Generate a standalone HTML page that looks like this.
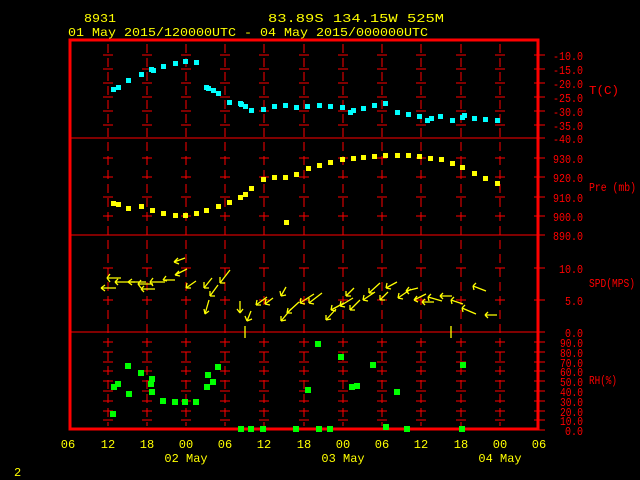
<!DOCTYPE html>
<html><head><meta charset="utf-8"><style>
html,body{margin:0;padding:0;background:#000;width:640px;height:480px;overflow:hidden}
svg{display:block}
text{font-family:"Liberation Mono",monospace;font-size:12px}
.y{fill:#ffff00}.r{fill:#ff0000}
</style></head><body>
<svg width="640" height="480" viewBox="0 0 640 480">
<defs>
<g id="col" stroke="#ff0000" stroke-width="1">
<line x1="0" y1="44" x2="0" y2="426" stroke-dasharray="9,5"/>
<path d="M-5 55h10M-5 69h10M-5 83h10M-5 97h10M-5 111h10M-5 125h10M-5 158h10M-5 177h10M-5 197h10M-5 216h10M-5 268h10M-5 300h10M-5 342h10M-5 352h10M-5 362h10M-5 371h10M-5 381h10M-5 391h10M-5 401h10M-5 411h10M-5 420h10"/>
</g>
<rect id="c" width="5" height="5" fill="#00ffff"/>
<rect id="p" width="5" height="5" fill="#ffff00"/>
<rect id="g" width="6" height="6" fill="#00ff00"/>
</defs>
<g>
<use href="#col" x="108"/><use href="#col" x="147"/><use href="#col" x="186"/><use href="#col" x="225"/><use href="#col" x="264"/><use href="#col" x="304"/><use href="#col" x="343"/><use href="#col" x="382"/><use href="#col" x="421"/><use href="#col" x="461"/><use href="#col" x="500"/>
</g>
<g stroke="#ff0000">
<line x1="70" y1="138" x2="539" y2="138"/>
<line x1="70" y1="235" x2="539" y2="235"/>
<line x1="70" y1="332" x2="539" y2="332"/>
<path d="M534 55h11M534 69h11M534 83h11M534 97h11M534 111h11M534 125h11M534 138h11M534 158h11M534 177h11M534 197h11M534 216h11M534 235h11M534 268h11M534 300h11M534 332h11M534 342h11M534 352h11M534 362h11M534 371h11M534 381h11M534 391h11M534 401h11M534 411h11M534 420h11M534 430h11"/>
<rect x="70" y="40" width="468" height="389" fill="none" stroke-width="3"/>
</g>
<g class="r" text-anchor="end">
<text x="583" y="60" textLength="30" lengthAdjust="spacingAndGlyphs">-10.0</text><text x="583" y="74" textLength="30" lengthAdjust="spacingAndGlyphs">-15.0</text><text x="583" y="88" textLength="30" lengthAdjust="spacingAndGlyphs">-20.0</text><text x="583" y="102" textLength="30" lengthAdjust="spacingAndGlyphs">-25.0</text><text x="583" y="116" textLength="30" lengthAdjust="spacingAndGlyphs">-30.0</text><text x="583" y="130" textLength="30" lengthAdjust="spacingAndGlyphs">-35.0</text><text x="583" y="143" textLength="30" lengthAdjust="spacingAndGlyphs">-40.0</text>
<text x="583" y="163" textLength="30" lengthAdjust="spacingAndGlyphs">930.0</text><text x="583" y="182" textLength="30" lengthAdjust="spacingAndGlyphs">920.0</text><text x="583" y="202" textLength="30" lengthAdjust="spacingAndGlyphs">910.0</text><text x="583" y="221" textLength="30" lengthAdjust="spacingAndGlyphs">900.0</text><text x="583" y="240" textLength="30" lengthAdjust="spacingAndGlyphs">890.0</text>
<text x="583" y="273" textLength="24" lengthAdjust="spacingAndGlyphs">10.0</text><text x="583" y="305" textLength="18" lengthAdjust="spacingAndGlyphs">5.0</text><text x="583" y="337" textLength="18" lengthAdjust="spacingAndGlyphs">0.0</text>
<text x="583" y="347" textLength="23" lengthAdjust="spacingAndGlyphs">90.0</text><text x="583" y="357" textLength="23" lengthAdjust="spacingAndGlyphs">80.0</text><text x="583" y="367" textLength="23" lengthAdjust="spacingAndGlyphs">70.0</text><text x="583" y="376" textLength="23" lengthAdjust="spacingAndGlyphs">60.0</text><text x="583" y="386" textLength="23" lengthAdjust="spacingAndGlyphs">50.0</text><text x="583" y="396" textLength="23" lengthAdjust="spacingAndGlyphs">40.0</text><text x="583" y="406" textLength="23" lengthAdjust="spacingAndGlyphs">30.0</text><text x="583" y="416" textLength="23" lengthAdjust="spacingAndGlyphs">20.0</text><text x="583" y="425" textLength="23" lengthAdjust="spacingAndGlyphs">10.0</text><text x="583" y="435" textLength="18" lengthAdjust="spacingAndGlyphs">0.0</text>
</g>
<g class="r">
<text x="589" y="94" textLength="30" lengthAdjust="spacingAndGlyphs">T(C)</text><text x="589" y="191" textLength="47" lengthAdjust="spacingAndGlyphs">Pre (mb)</text><text x="589" y="287" textLength="46" lengthAdjust="spacingAndGlyphs">SPD(MPS)</text><text x="589" y="384" textLength="28" lengthAdjust="spacingAndGlyphs">RH(%)</text>
</g>
<g class="y">
<text x="84" y="22" textLength="32" lengthAdjust="spacingAndGlyphs">8931</text>
<text x="268" y="22" textLength="176" lengthAdjust="spacingAndGlyphs">83.89S  134.15W   525M</text>
<text x="68" y="36" textLength="360" lengthAdjust="spacingAndGlyphs">01 May 2015/120000UTC - 04 May 2015/000000UTC</text>
<g text-anchor="middle">
<text x="68" y="448">06</text><text x="108" y="448">12</text><text x="147" y="448">18</text><text x="186" y="448">00</text><text x="225" y="448">06</text><text x="264" y="448">12</text><text x="304" y="448">18</text><text x="343" y="448">00</text><text x="382" y="448">06</text><text x="421" y="448">12</text><text x="461" y="448">18</text><text x="500" y="448">00</text><text x="539" y="448">06</text>
<text x="186" y="462">02 May</text><text x="343" y="462">03 May</text><text x="500" y="462">04 May</text>
</g>
<text x="14" y="476">2</text>
</g>
<g transform="translate(-2,-2)">
<use href="#c" x="113" y="89"/><use href="#c" x="118" y="87"/><use href="#c" x="128" y="80"/><use href="#c" x="141" y="74"/><use href="#c" x="151" y="69"/><use href="#c" x="153" y="70"/><use href="#c" x="163" y="66"/><use href="#c" x="175" y="63"/><use href="#c" x="185" y="61"/><use href="#c" x="196" y="62"/><use href="#c" x="206" y="87"/><use href="#c" x="208" y="88"/><use href="#c" x="213" y="90"/><use href="#c" x="218" y="93"/><use href="#c" x="229" y="102"/><use href="#c" x="240" y="103"/><use href="#c" x="241" y="104"/><use href="#c" x="245" y="106"/><use href="#c" x="251" y="110"/><use href="#c" x="263" y="109"/><use href="#c" x="274" y="106"/><use href="#c" x="285" y="105"/><use href="#c" x="296" y="107"/><use href="#c" x="307" y="106"/><use href="#c" x="319" y="105"/><use href="#c" x="330" y="106"/><use href="#c" x="342" y="107"/><use href="#c" x="350" y="112"/><use href="#c" x="353" y="110"/><use href="#c" x="363" y="108"/><use href="#c" x="374" y="105"/><use href="#c" x="385" y="103"/><use href="#c" x="397" y="112"/><use href="#c" x="408" y="114"/><use href="#c" x="419" y="116"/><use href="#c" x="427" y="120"/><use href="#c" x="431" y="118"/><use href="#c" x="440" y="116"/><use href="#c" x="452" y="120"/><use href="#c" x="462" y="117"/><use href="#c" x="464" y="115"/><use href="#c" x="474" y="118"/><use href="#c" x="485" y="119"/><use href="#c" x="497" y="120"/>
<use href="#p" x="113" y="203"/><use href="#p" x="118" y="204"/><use href="#p" x="128" y="208"/><use href="#p" x="141" y="206"/><use href="#p" x="152" y="210"/><use href="#p" x="163" y="213"/><use href="#p" x="175" y="215"/><use href="#p" x="185" y="215"/><use href="#p" x="196" y="213"/><use href="#p" x="206" y="210"/><use href="#p" x="218" y="206"/><use href="#p" x="229" y="202"/><use href="#p" x="240" y="197"/><use href="#p" x="245" y="194"/><use href="#p" x="251" y="188"/><use href="#p" x="263" y="179"/><use href="#p" x="274" y="177"/><use href="#p" x="285" y="177"/><use href="#p" x="296" y="174"/><use href="#p" x="308" y="168"/><use href="#p" x="319" y="165"/><use href="#p" x="330" y="162"/><use href="#p" x="342" y="159"/><use href="#p" x="353" y="158"/><use href="#p" x="363" y="157"/><use href="#p" x="374" y="156"/><use href="#p" x="385" y="155"/><use href="#p" x="397" y="155"/><use href="#p" x="408" y="155"/><use href="#p" x="419" y="156"/><use href="#p" x="430" y="158"/><use href="#p" x="441" y="159"/><use href="#p" x="452" y="163"/><use href="#p" x="462" y="167"/><use href="#p" x="474" y="173"/><use href="#p" x="485" y="178"/><use href="#p" x="497" y="183"/><use href="#p" x="286" y="222"/>
</g>
<g transform="translate(-3,-3)">
<use href="#g" x="113" y="414"/><use href="#g" x="114" y="387"/><use href="#g" x="118" y="384"/><use href="#g" x="128" y="366"/><use href="#g" x="129" y="394"/><use href="#g" x="141" y="373"/><use href="#g" x="151" y="384"/><use href="#g" x="152" y="379"/><use href="#g" x="152" y="392"/><use href="#g" x="163" y="401"/><use href="#g" x="175" y="402"/><use href="#g" x="185" y="402"/><use href="#g" x="196" y="402"/><use href="#g" x="207" y="387"/><use href="#g" x="208" y="375"/><use href="#g" x="213" y="382"/><use href="#g" x="218" y="367"/><use href="#g" x="308" y="390"/><use href="#g" x="318" y="344"/><use href="#g" x="341" y="357"/><use href="#g" x="352" y="387"/><use href="#g" x="357" y="386"/><use href="#g" x="373" y="365"/><use href="#g" x="397" y="392"/><use href="#g" x="463" y="365"/>
<use href="#g" x="241" y="429"/><use href="#g" x="251" y="429"/><use href="#g" x="263" y="429"/><use href="#g" x="296" y="429"/><use href="#g" x="319" y="429"/><use href="#g" x="330" y="429"/><use href="#g" x="386" y="427"/><use href="#g" x="407" y="429"/><use href="#g" x="462" y="429"/>
</g>
<g stroke="#ffff00" stroke-width="1.3" fill="none">
<line x1="245" y1="326" x2="245" y2="338"/><line x1="451" y1="326" x2="451" y2="338"/>
<path d="M101 288h15M101 288l4-3M101 288l4 3"/>
<path d="M107 278h14M107 278l3-4M107 278l3 4"/>
<path d="M115 282h20M115 282l3-3M115 282l3 3"/>
<path d="M128 282h18M128 282l4-3M128 282l4 3"/>
<path d="M138 284h15M138 284l3-4M138 284l3 4"/>
<path d="M141 289h14M141 289l3-3M141 289l3 3"/>
<path d="M150 282h15M150 282l3-4M150 282l3 4"/>
<path d="M163 280h12M163 280l3-4M163 280l4 1"/>
<path d="M175 275l12-6M175 275l4-4M175 275l5 1"/>
<path d="M174 262l11-4M174 262l4-4M174 262l5 2"/>
<path d="M186 288l10-7M186 288l1-5M186 288l5 0"/>
<path d="M204 288l8-10M204 288l0-6M204 288l5 0"/>
<path d="M205 314l4-14M205 314l-1-5M205 314l4-3"/>
<path d="M210 296l8-11M210 296l0-5M210 296l5 0"/>
<path d="M220 283l10-13M220 283l0-6M220 283l5 0"/>
<path d="M240 313l0-12M240 313l-3-4M240 313l3-4"/>
<path d="M247 321l4-10M247 321l-2-5M247 321l5-2"/>
<path d="M256 305l11-8M256 305l1-5M256 305l5 0"/>
<path d="M265 304l8-6M265 304l1-5M265 304l5 1"/>
<path d="M281 296l5-9M281 296l-1-5M281 296l5-1"/>
<path d="M281 321l10-12M281 321l0-5M281 321l5-1"/>
<path d="M287 313l12-11M287 313l1-5M287 313l5 0"/>
<path d="M300 303l14-9M300 303l1-5M300 303l5 1"/>
<path d="M309 303l13-10M309 303l0-5M309 303l5 1"/>
<path d="M326 320l10-11M326 320l0-5M326 320l5-1"/>
<path d="M331 310l13-7M331 310l1-5M331 310l5 1"/>
<path d="M340 306l13-8M340 306l1-5M340 306l5 1"/>
<path d="M346 296l8-8M346 296l0-5M346 296l5 0"/>
<path d="M350 310l10-10M350 310l0-5M350 310l5 0"/>
<path d="M363 300l12-8M363 300l1-5M363 300l5 1"/>
<path d="M369 293l11-10M369 293l0-5M369 293l5 0"/>
<path d="M380 300l8-8M380 300l0-5M380 300l5 0"/>
<path d="M386 288l11-6M386 288l1-5M386 288l5 1"/>
<path d="M398 298l13-9M398 298l1-5M398 298l5 1"/>
<path d="M406 291l12-3M406 291l3-4M406 291l3 3"/>
<path d="M414 300l12-6M414 300l3-4M414 300l4 2"/>
<path d="M422 302h12M422 302l3-3M422 302l3 3"/>
<path d="M428 297l14 4M428 297l3-3M428 297l1 4"/>
<path d="M440 296h12M440 296l3-3M440 296l3 3"/>
<path d="M451 300l12 4M451 300l3-3M451 300l1 4"/>
<path d="M462 308l14 6M462 308l3-3M462 308l1 4"/>
<path d="M473 286l13 5M473 286l3-3M473 286l1 4"/>
<path d="M485 315h12M485 315l3-3M485 315l3 3"/>
</g>
</svg>
</body></html>
